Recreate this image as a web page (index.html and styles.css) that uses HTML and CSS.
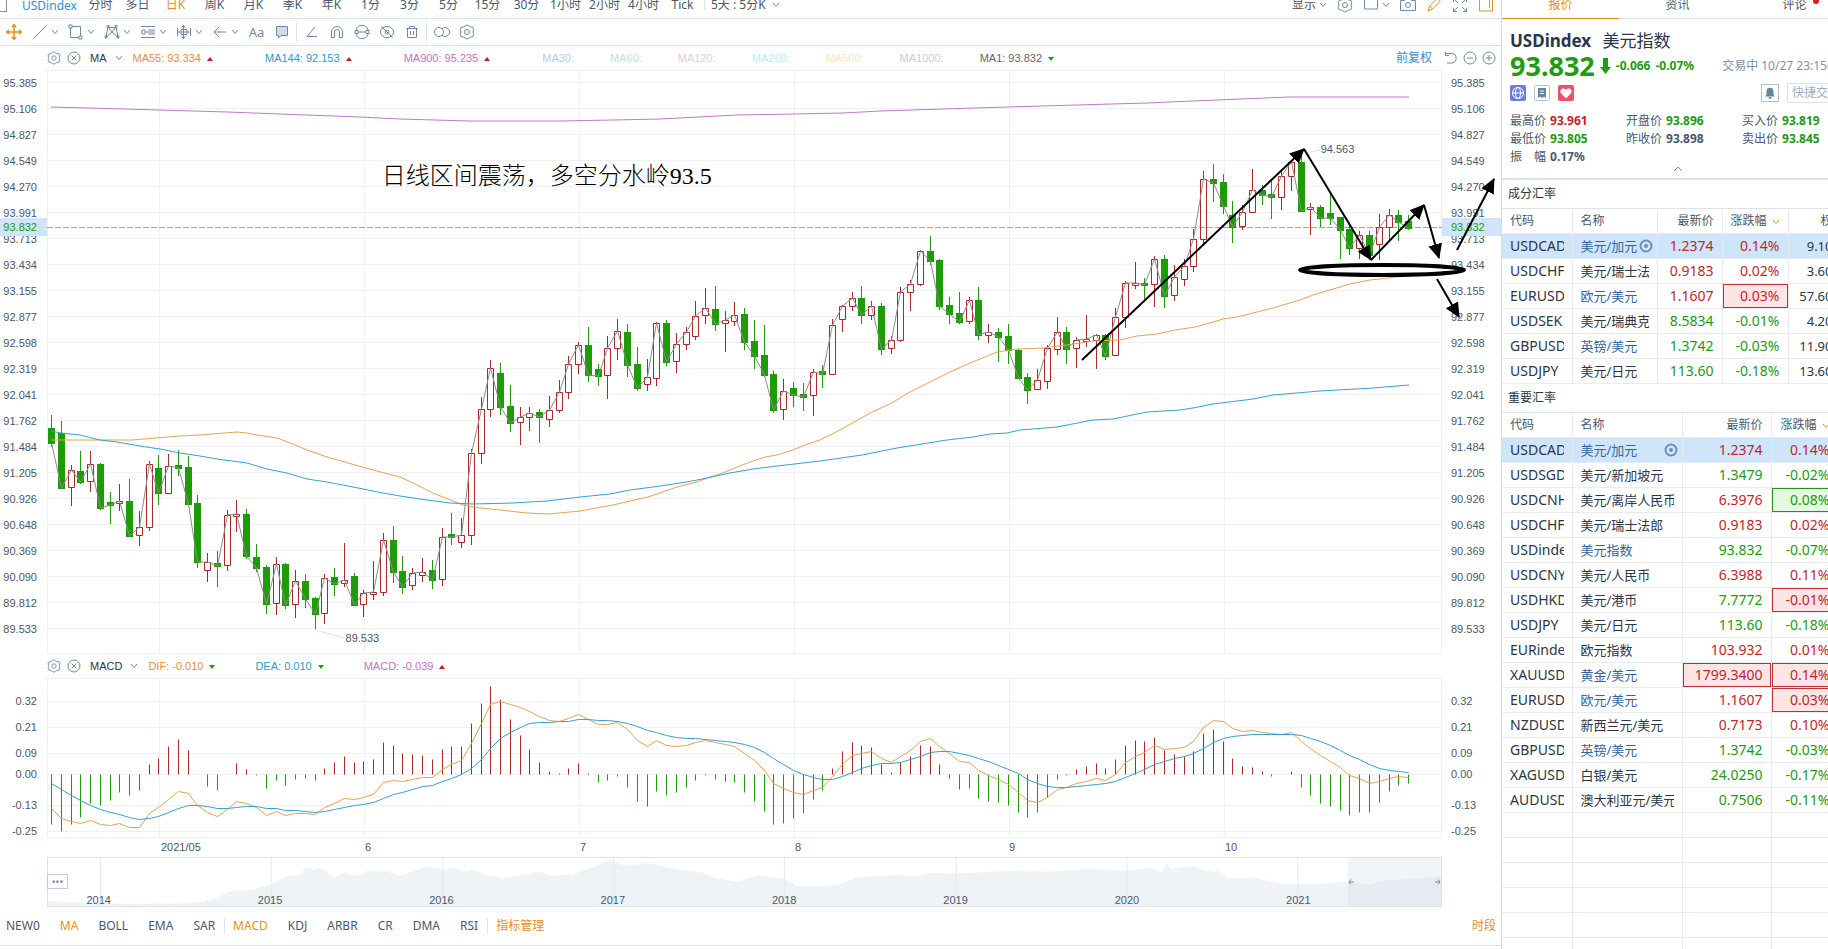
FILE: index.html
```html
<!DOCTYPE html>
<html lang="zh-CN">
<head>
    <meta charset="UTF-8">
    <meta name="viewport" content="width=device-width, initial-scale=1.0">
    <title>USDindex 美元指数</title>
    <link rel="stylesheet" href="styles.css">
</head>
<body>
    <svg class="sprite" aria-hidden="true">
        <symbol id="i-chev" viewBox="0 0 8 6"><path d="M1 1l3 3.5L7 1"/></symbol>
        <symbol id="i-gear" viewBox="0 0 16 16"><path d="M6 2l2-1 2 1 1.500 1 2.500.3.700 2.200L14 8l.7 2.500L14 12.700l-2.500.3L10 14l-2 1-2-1-1.500-1L2 12.700l-.7-2.200L2 8l-.7-2.500L2 3.300 4.500 3z"/><circle cx="8" cy="8" r="2.500"/></symbol>
        <symbol id="i-close" viewBox="0 0 14 14"><circle cx="7" cy="7" r="6"/><path d="M4.500 4.500l5 5M9.500 4.500l-5 5"/></symbol>
        <symbol id="i-eye" viewBox="0 0 14 14"><circle cx="7" cy="7" r="5.500" stroke-width="2"/><circle cx="7" cy="7" r="2" fill="currentColor" stroke="none"/></symbol>
    </svg>

    <div class="app">
        <main class="main">
            <nav class="periods" aria-label="周期">
                <span class="corner"></span>
                <a class="symbol" href="#">USDindex</a>
                <button class="short">分时</button>
                <button class="short">多日</button>
                <button class="active">日K</button>
                <button>周K</button>
                <button>月K</button>
                <button>季K</button>
                <button>年K</button>
                <button>1分</button>
                <button>3分</button>
                <button>5分</button>
                <button>15分</button>
                <button>30分</button>
                <button>1小时</button>
                <button>2小时</button>
                <button>4小时</button>
                <button>Tick</button>
                <button class="custom">5天 : 5分K <svg class="chev"><use href="#i-chev"/></svg></button>
                <div class="view-tools">
                    <button>显示<svg class="chev"><use href="#i-chev"/></svg></button>
                    <button aria-label="设置"><svg class="icon"><use href="#i-gear"/></svg></button>
                    <button aria-label="布局"><svg class="icon" viewBox="0 0 16 16"><path d="M1.500-2v14h13V-2"/></svg><svg class="chev"><use href="#i-chev"/></svg></button>
                    <button aria-label="截图"><svg class="icon" viewBox="0 0 16 16"><path d="M.5 3.500h4l1-2h5l1 2h4v10H.5z"/><circle cx="8" cy="8" r="2.500"/></svg></button>
                    <button aria-label="画线" class="active"><svg class="icon" viewBox="0 0 16 16"><path d="M2 14l1.500-5L11 1.500l3 3L6.500 12zM3.500 9l3 3"/></svg></button>
                    <button aria-label="全屏"><svg class="icon" viewBox="0 0 16 16"><path d="M1.500 5V1.500H5M1.500 1.500L6 6M11 1.500h3.500V5M14.500 1.500L10 6M1.500 11v3.500H5M1.500 14.500L6 10M14.500 11v3.500H11M14.500 14.500L10 10"/></svg></button>
                    <button aria-label="侧栏" class="active"><svg class="icon" viewBox="0 0 16 16"><path d="M1.500-1v15h13V-1M11.500 2v9"/></svg></button>
                </div>
            </nav>

            <div class="toolbar" role="toolbar" aria-label="画线工具">
                <button class="move active" aria-label="移动"><svg class="icon" viewBox="0 0 16 16"><path stroke-width="1.500" d="M8 1v14M1 8h14M6 3l2-2.300L10 3M6 13l2 2.300L10 13M3 6L.7 8 3 10M13 6l2.300 2-2.300 2"/></svg></button>
                <button class="group" aria-label="直线"><svg class="icon" viewBox="0 0 16 16"><path d="M2 14L14 2"/></svg><svg class="chev"><use href="#i-chev"/></svg></button>
                <button class="group" aria-label="图形"><svg class="icon" viewBox="0 0 16 16"><path d="M4 2.500h8.500V12M11 13.500H2.500V4M1 1h3v3H1zM11 12h3v3h-3z"/></svg><svg class="chev"><use href="#i-chev"/></svg></button>
                <button class="group" aria-label="形态"><svg class="icon" viewBox="0 0 16 16"><path d="M2 13L4 3l4 5 4-5 2 10-6-5zM4 3l8 1M1 12h2v2H1zM3 1.500h2v2H3zM11 1.500h2v2h-2zM13 12h2v2h-2z"/></svg><svg class="chev"><use href="#i-chev"/></svg></button>
                <button class="group" aria-label="黄金分割"><svg class="icon" viewBox="0 0 16 16"><path d="M1 2.500h14M1 13.500h14M8 6h7M8 10h7M2 6h3v4H2zM5 8h10"/></svg><svg class="chev"><use href="#i-chev"/></svg></button>
                <button class="group" aria-label="测量"><svg class="icon" viewBox="0 0 16 16"><path d="M1.500 4v8M14.500 4v8M1.500 8h13M7.500 2v12M5 5.500h6v5H5zM5.500 3.500l2-2 2 2M5.500 12.500l2 2 2-2"/></svg><svg class="chev"><use href="#i-chev"/></svg></button>
                <button class="group" aria-label="箭头"><svg class="icon" viewBox="0 0 16 16"><path d="M14 8H2M7 3L2 8l5 5"/></svg><svg class="chev"><use href="#i-chev"/></svg></button>
                <button class="aa">Aa</button>
                <button aria-label="批注"><svg class="icon" viewBox="0 0 16 16"><path fill="#cfdbe7" d="M2.500 2.500h11v9H7L4.500 14v-2.500h-2z"/></svg></button>
                <i class="sep"></i>
                <button aria-label="角度"><svg class="icon" viewBox="0 0 16 16"><path d="M11 3L3 12.500h10"/></svg></button>
                <button aria-label="磁铁"><svg class="icon" viewBox="0 0 16 16"><path d="M2.500 13.500V8a5.500 5.500 0 0 1 11 0v5.500h-3V8a2.500 2.500 0 0 0-5 0v5.500z"/></svg></button>
                <button aria-label="锁定"><svg class="icon" viewBox="0 0 16 16"><path d="M2 6a6.200 6.200 0 0 1 12 0M2 10a6.200 6.200 0 0 0 12 0M4 8h8M1 6.500h3v3H1zM12 6.500h3v3h-3z"/></svg></button>
                <button aria-label="隐藏"><svg class="icon" viewBox="0 0 16 16"><ellipse cx="8" cy="8" rx="6.500" ry="5.500"/><circle cx="8" cy="8" r="2"/><path d="M2.500 2.500l11 11"/></svg></button>
                <button aria-label="删除"><svg class="icon" viewBox="0 0 16 16"><path d="M2 4.500h12M5.500 4.500v-2h5v2M3.500 4.500v9h9v-9M6.500 7v4M9.500 7v4"/></svg></button>
                <i class="sep"></i>
                <button aria-label="对比"><svg class="icon" viewBox="0 0 16 16"><circle cx="5" cy="8" r="4.500"/><path d="M8 4.700a4.500 4.500 0 1 1 0 6.600"/></svg></button>
                <button aria-label="工具设置"><svg class="icon"><use href="#i-gear"/></svg></button>
            </div>

            <div class="legend">
                <svg class="icon"><use href="#i-gear"/></svg>
                <svg class="icon"><use href="#i-close"/></svg>
                <button class="name ma">MA <svg class="chev"><use href="#i-chev"/></svg></button>
                <div class="items">
                    <span class="c-orange up">MA55: 93.334</span>
                    <span class="c-blue up">MA144: 92.153</span>
                    <span class="c-purple up">MA900: 95.235</span>
                    <span class="c-ma30">MA30:</span>
                    <span class="c-ma60">MA60:</span>
                    <span class="c-ma120">MA120:</span>
                    <span class="c-ma260">MA260:</span>
                    <span class="c-ma500">MA500:</span>
                    <span class="c-ma1000">MA1000:</span>
                    <span class="c-gray down">MA1: 93.832</span>
                </div>
                <div class="zoom-tools">
                    <a href="#">前复权</a>
                    <button aria-label="撤销"><svg class="icon" viewBox="0 0 14 14"><path d="M1.500 1v3.500H5M2 2.500h6a4.800 4.800 0 0 1 0 9.500H3"/></svg></button>
                    <button aria-label="缩小"><svg class="icon" viewBox="0 0 14 14"><circle cx="7" cy="7" r="6"/><path d="M4 7h6"/></svg></button>
                    <button aria-label="放大"><svg class="icon" viewBox="0 0 14 14"><circle cx="7" cy="7" r="6"/><path d="M4 7h6M7 4v6"/></svg></button>
                </div>
            </div>

            <div class="chart-row">
                <div class="axis left" data-axis="price"></div>
                <div class="plot">
                    <svg id="price" class="price-chart" viewBox="0 0 1395 584" preserveAspectRatio="none"></svg>
                    <p class="note">日线区间震荡，多空分水岭93.5</p>
                    <span class="mark high">94.563</span>
                    <span class="mark low">89.533</span>
                </div>
                <div class="axis right" data-axis="price"></div>
                <svg class="drawing" viewBox="0 0 1501 584" preserveAspectRatio="none">
                    <defs>
                        <marker id="head" markerUnits="userSpaceOnUse" markerWidth="16" markerHeight="14" refX="14" refY="7" orient="auto">
                            <path d="M0 0l15 7-15 7z"/>
                        </marker>
                    </defs>
                    <g fill="none" stroke="#000" stroke-width="2" marker-end="url(#head)">
                        <path d="M1082 290L1304 79"/>
                        <path d="M1304 79L1371 190"/>
                        <path d="M1371 190L1424 135"/>
                        <path d="M1424 135L1439 188"/>
                        <path d="M1457 180L1494 109"/>
                        <path d="M1437 209L1459 247"/>
                    </g>
                    <ellipse cx="1382" cy="200" rx="82" ry="5" fill="none" stroke="#000" stroke-width="4"/>
                </svg>
            </div>

            <div class="legend">
                <svg class="icon"><use href="#i-gear"/></svg>
                <svg class="icon"><use href="#i-close"/></svg>
                <button class="name">MACD <svg class="chev"><use href="#i-chev"/></svg></button>
                <div class="items tight">
                    <span class="c-orange down">DIF: -0.010</span>
                    <span class="c-blue down">DEA: 0.010</span>
                    <span class="c-purple up">MACD: -0.039</span>
                </div>
            </div>

            <div class="chart-row">
                <div class="axis macd left"><span>0.32</span><span>0.21</span><span>0.09</span><span class="zero">0.00</span><span>-0.13</span><span>-0.25</span></div>
                <svg id="macd" class="macd-chart" viewBox="0 0 1395 160" preserveAspectRatio="none"></svg>
                <div class="axis macd right"><span>0.32</span><span>0.21</span><span>0.09</span><span class="zero">0.00</span><span>-0.13</span><span>-0.25</span></div>
            </div>

            <div class="months">
                <span></span><span>2021/05</span><span>6</span><span>7</span><span>8</span><span>9</span><span>10</span>
            </div>

            <div class="chart-row">
                <span></span>
                <div class="navigator">
                    <svg id="nav" viewBox="0 0 1395 49" preserveAspectRatio="none"></svg>
                    <div class="years">
                        <span>2014</span><span>2015</span><span>2016</span><span>2017</span><span>2018</span><span>2019</span><span>2020</span><span>2021</span>
                    </div>
                    <button class="more" aria-label="更多">•••</button>
                    <div class="range">
                        <svg viewBox="0 0 6 8"><path d="M6 4H1M3 1.500L1 4l2 2.500"/></svg>
                        <svg viewBox="0 0 6 8"><path d="M0 4h5M3 1.500L5 4 3 6.500"/></svg>
                    </div>
                </div>
                <span></span>
            </div>

            <nav class="indicators" aria-label="指标">
                <button>NEW0</button>
                <button class="active">MA</button>
                <button>BOLL</button>
                <button>EMA</button>
                <button>SAR</button>
                <button class="active line">MACD</button>
                <button>KDJ</button>
                <button>ARBR</button>
                <button>CR</button>
                <button>DMA</button>
                <button>RSI</button>
                <button class="active line">指标管理</button>
                <button class="active session">时段</button>
            </nav>
        </main>

        <aside class="side">
            <nav class="side-tabs">
                <a class="active" href="#">报价</a>
                <a href="#">资讯</a>
                <a class="dot" href="#">评论</a>
            </nav>

            <section class="quote">
                <h1>USDindex <span>美元指数</span></h1>
                <div class="last">
                    <strong>93.832</strong>
                    <svg class="drop" viewBox="0 0 11 16"><path d="M3 0h5v9h3l-5.500 7L0 9h3z"/></svg>
                    <b>-0.066</b>
                    <b>-0.07%</b>
                    <time>交易中 10/27 23:15(美东)</time>
                </div>
                <div class="badges">
                    <svg viewBox="0 0 16 16"><rect width="16" height="16" rx="2" fill="#6b7fd0"/><g fill="none" stroke="#fff"><circle cx="8" cy="8" r="5.500"/><ellipse cx="8" cy="8" rx="2.500" ry="5.500"/><path d="M2.500 8h11"/></g></svg>
                    <svg viewBox="0 0 16 16"><rect x=".5" y=".5" width="15" height="15" rx="1" fill="#fff" stroke="#b4c2d0"/><path fill="#6585a5" d="M4 3h8v10l-2-1.500L8 13l-2-1.500L4 13z"/><path stroke="#fff" d="M6 6h4M6 8.500h4"/></svg>
                    <svg viewBox="0 0 16 16"><rect width="16" height="16" rx="2" fill="#e9526b"/><path fill="#fff" d="M8 13.500L3 8.300C.8 5.500 4.500 1.500 8 4.800c3.500-3.300 7.200.7 5 3.500z"/></svg>
                    <button class="bell" aria-label="提醒"><svg viewBox="0 0 18 18"><path d="M9 3c3 0 4 2 4 5v3l1.500 2h-11L5 11V8c0-3 1-5 4-5zM7.500 13.500h3v2h-3z"/></svg></button>
                    <button class="trade">快捷交易</button>
                </div>
                <dl class="stats">
                    <div><dt>最高价</dt><dd class="up-text">93.961</dd></div>
                    <div><dt>开盘价</dt><dd class="down-text">93.896</dd></div>
                    <div><dt>买入价</dt><dd class="down-text">93.819</dd></div>
                    <div><dt>最低价</dt><dd class="down-text">93.805</dd></div>
                    <div><dt>昨收价</dt><dd>93.898</dd></div>
                    <div><dt>卖出价</dt><dd class="down-text">93.845</dd></div>
                    <div><dt>振　幅</dt><dd>0.17%</dd></div>
                </dl>
                <button class="fold" aria-label="收起"><svg viewBox="0 0 10 6"><path d="M1 5l4-4 4 4"/></svg></button>
            </section>

            <h2>成分汇率</h2>
            <table class="parts">
                <colgroup><col class="code"><col class="title"><col class="price"><col class="pct"><col class="weight"></colgroup>
                <thead>
                    <tr><th>代码</th><th>名称</th><th>最新价</th><th>涨跌幅<svg class="chev"><use href="#i-chev"/></svg></th><th>权重</th></tr>
                </thead>
                <tbody>
                    <tr class="selected"><td><span>USDCAD</span></td><td class="held"><span>美元/加元</span><svg class="eye"><use href="#i-eye"/></svg></td><td class="up-text">1.2374</td><td class="up-text">0.14%</td><td>9.10</td></tr>
                    <tr><td><span>USDCHF</span></td><td><span>美元/瑞士法郎</span></td><td class="up-text">0.9183</td><td class="up-text">0.02%</td><td>3.60</td></tr>
                    <tr><td><span>EURUSD</span></td><td class="held"><span>欧元/美元</span></td><td class="up-text">1.1607</td><td class="up-text flash-up">0.03%</td><td>57.60</td></tr>
                    <tr><td><span>USDSEK</span></td><td><span>美元/瑞典克朗</span></td><td class="down-text">8.5834</td><td class="down-text">-0.01%</td><td>4.20</td></tr>
                    <tr><td><span>GBPUSD</span></td><td class="held"><span>英镑/美元</span></td><td class="down-text">1.3742</td><td class="down-text">-0.03%</td><td>11.90</td></tr>
                    <tr><td><span>USDJPY</span></td><td><span>美元/日元</span></td><td class="down-text">113.60</td><td class="down-text">-0.18%</td><td>13.60</td></tr>
                </tbody>
            </table>

            <h2>重要汇率</h2>
            <table class="majors">
                <colgroup><col class="code"><col class="title"><col class="price"><col class="pct"></colgroup>
                <thead>
                    <tr><th>代码</th><th>名称</th><th>最新价</th><th>涨跌幅<svg class="chev"><use href="#i-chev"/></svg></th></tr>
                </thead>
                <tbody>
                    <tr class="selected"><td><span>USDCAD</span></td><td class="held"><span>美元/加元</span><svg class="eye"><use href="#i-eye"/></svg></td><td class="up-text">1.2374</td><td class="up-text">0.14%</td></tr>
                    <tr><td><span>USDSGD</span></td><td><span>美元/新加坡元</span></td><td class="down-text">1.3479</td><td class="down-text">-0.02%</td></tr>
                    <tr><td><span>USDCNH</span></td><td><span>美元/离岸人民币</span></td><td class="up-text">6.3976</td><td class="down-text flash-down">0.08%</td></tr>
                    <tr><td><span>USDCHF</span></td><td><span>美元/瑞士法郎</span></td><td class="up-text">0.9183</td><td class="up-text">0.02%</td></tr>
                    <tr><td><span>USDindex</span></td><td class="held"><span>美元指数</span></td><td class="down-text">93.832</td><td class="down-text">-0.07%</td></tr>
                    <tr><td><span>USDCNY</span></td><td><span>美元/人民币</span></td><td class="up-text">6.3988</td><td class="up-text">0.11%</td></tr>
                    <tr><td><span>USDHKD</span></td><td><span>美元/港币</span></td><td class="down-text">7.7772</td><td class="up-text flash-up">-0.01%</td></tr>
                    <tr><td><span>USDJPY</span></td><td><span>美元/日元</span></td><td class="down-text">113.60</td><td class="down-text">-0.18%</td></tr>
                    <tr><td><span>EURindex</span></td><td><span>欧元指数</span></td><td class="up-text">103.932</td><td class="up-text">0.01%</td></tr>
                    <tr><td><span>XAUUSD</span></td><td class="held"><span>黄金/美元</span></td><td class="up-text flash-up">1799.3400</td><td class="up-text flash-up">0.14%</td></tr>
                    <tr><td><span>EURUSD</span></td><td class="held"><span>欧元/美元</span></td><td class="up-text">1.1607</td><td class="up-text flash-up">0.03%</td></tr>
                    <tr><td><span>NZDUSD</span></td><td><span>新西兰元/美元</span></td><td class="up-text">0.7173</td><td class="up-text">0.10%</td></tr>
                    <tr><td><span>GBPUSD</span></td><td class="held"><span>英镑/美元</span></td><td class="down-text">1.3742</td><td class="down-text">-0.03%</td></tr>
                    <tr><td><span>XAGUSD</span></td><td><span>白银/美元</span></td><td class="down-text">24.0250</td><td class="down-text">-0.17%</td></tr>
                    <tr><td><span>AUDUSD</span></td><td><span>澳大利亚元/美元</span></td><td class="down-text">0.7506</td><td class="down-text">-0.11%</td></tr>
                    <tr><td></td><td></td><td></td><td></td></tr>
                    <tr><td></td><td></td><td></td><td></td></tr>
                    <tr><td></td><td></td><td></td><td></td></tr>
                    <tr><td></td><td></td><td></td><td></td></tr>
                    <tr><td></td><td></td><td></td><td></td></tr>
                    <tr><td></td><td></td><td></td><td></td></tr>
                </tbody>
            </table>
        </aside>
    </div>

    <script src="chart.js"></script>
</body>
</html>
```

FILE: styles.css
```css
* {
    box-sizing: border-box;
}

body {
    margin: 0;
    font-family: "Noto Sans", "Noto Sans CJK SC", sans-serif;
    font-size: 12px;
    line-height: 16px;
    color: #4a586a;
    background: #fff;
}

button {
    display: inline-flex;
    align-items: center;
    justify-content: center;
    padding: 0;
    border: 0;
    background: none;
    font: inherit;
    color: inherit;
    white-space: nowrap;
    cursor: pointer;
}

a {
    color: inherit;
    text-decoration: none;
}

svg {
    display: block;
    flex: none;
}

.sprite {
    position: absolute;
    width: 0;
    height: 0;
}

.icon {
    width: 16px;
    height: 16px;
    fill: none;
    stroke: #6f8aa6;
}

.chev {
    width: 8px;
    height: 6px;
    fill: none;
    stroke: #6f8aa6;
}

.active {
    color: #e0911f;
}

.active .icon {
    stroke: #e0911f;
}

.up-text {
    color: #c0262c;
}

.down-text {
    color: #229a12;
}

.app {
    display: grid;
    grid-template-columns: minmax(0, 1fr) 327px;
    height: 100vh;
    overflow: hidden;
}

.main {
    min-width: 0;
}

/* period bar */
.periods {
    display: flex;
    align-items: flex-start;
    height: 19px;
    line-height: 10px;
    border-bottom: 1px solid #dde2e8;
}

.periods button {
    width: 39px;
    height: 10px;
    line-height: 10px;
}

.periods .short {
    width: 37px;
}

.corner {
    width: 7px;
    height: 12px;
    margin-right: 15px;
    border: solid #7d92a8;
    border-width: 0 1px 1px 0;
}

.symbol {
    width: 60px;
    line-height: 12px;
    color: #2f8fd2;
}

.periods .custom {
    width: auto;
    margin-left: 2px;
    padding-left: 6px;
    gap: 6px;
    border-left: 1px solid #dde2e8;
}

.view-tools {
    display: flex;
    align-items: center;
    gap: 10px;
    margin-left: auto;
    padding-right: 7px;
}

.periods .view-tools button {
    width: auto;
    gap: 3px;
}

/* drawing tools */
.toolbar {
    display: flex;
    align-items: center;
    height: 27px;
    border-bottom: 1px solid #dde2e8;
}

.toolbar button {
    width: 25px;
    height: 24px;
}

.toolbar .move {
    width: 28px;
}

.toolbar .group {
    width: 36px;
    padding-right: 1px;
    gap: 3px;
}

.toolbar .aa {
    font-size: 13px;
    color: #6f8aa6;
}

.sep {
    width: 1px;
    height: 20px;
    margin: 0 2px;
    background: #dde2e8;
}

/* indicator legends */
.legend {
    display: flex;
    align-items: center;
    gap: 6px;
    height: 24px;
    padding: 0 5px 0 47px;
    font-family: "Liberation Sans", "Noto Sans CJK SC", sans-serif;
    font-size: 11px;
}

.legend .icon {
    width: 14px;
    height: 14px;
}

.legend .name {
    gap: 8px;
    margin-left: 3px;
    color: #2b3646;
}

.items {
    display: flex;
    gap: 36px;
    margin-left: 4px;
}

.items.tight {
    gap: 24px;
}

.up::after,
.down::after {
    content: "";
    display: inline-block;
    margin: 0 16px 1px 6px;
    border: 3px solid transparent;
    border-top: 0;
    border-bottom: 4px solid #b52020;
}

.down::after {
    border-bottom: 0;
    border-top: 4px solid #229a12;
}

.c-orange { color: #e58f3a; }
.c-blue { color: #2a9dc4; }
.c-purple { color: #cc6fc6; }
.c-ma30 { color: #b3cdea; }
.c-ma60 { color: #bfe3cd; }
.c-ma120 { color: #f3c6cd; }
.c-ma260 { color: #b5f0f0; }
.c-ma500 { color: #fbe5b8; }
.c-ma1000 { color: #d3c3ea; }
.c-gray { color: #666; }

.zoom-tools {
    display: flex;
    align-items: center;
    gap: 5px;
    margin-left: auto;
}

.zoom-tools a {
    margin-right: 7px;
    font-size: 12px;
    color: #2f8fd2;
}

/* charts */
.chart-row {
    position: relative;
    display: grid;
    grid-template-columns: 47px minmax(0, 1fr) 59px;
}

.plot {
    position: relative;
}

.price-chart {
    width: 100%;
    height: 584px;
}

.macd-chart {
    width: 100%;
    height: 160px;
}

.drawing {
    position: absolute;
    inset: 0;
    width: 100%;
    height: 100%;
    pointer-events: none;
}

.axis {
    position: relative;
    display: flex;
    flex-direction: column;
    font-family: "Liberation Sans", sans-serif;
    font-size: 11px;
    line-height: 26px;
}

.axis.left {
    padding-right: 10px;
    text-align: right;
}

.axis.right {
    padding-left: 9px;
}

.axis.macd {
    height: 160px;
    padding-top: 10px;
}

.axis .zero {
    line-height: 16px;
    margin-bottom: 10px;
}

.axis .now {
    position: absolute;
    top: 148px;
    left: 0;
    right: 0;
    padding: inherit;
    line-height: 18px;
    color: #229a12;
    background: #cfe5fc;
}

.note {
    position: absolute;
    left: 24%;
    top: 90px;
    margin: 0;
    font-family: "Liberation Serif", "Noto Sans CJK SC", serif;
    font-size: 24px;
    font-weight: 300;
    line-height: 32px;
    white-space: nowrap;
    color: #000;
}

.mark {
    position: absolute;
    font-family: "Liberation Sans", sans-serif;
    font-size: 11px;
}

.mark.high {
    left: 91.3%;
    top: 71px;
}

.mark.low {
    left: 21.4%;
    top: 560px;
}

.months {
    display: grid;
    grid-template-columns: 161fr 204fr 215fr 215fr 214fr 216fr 276fr;
    font-family: "Liberation Sans", sans-serif;
    font-size: 11px;
    line-height: 19px;
}

.navigator {
    position: relative;
    height: 50px;
    border: 1px solid #dde2e8;
}

.navigator > svg {
    width: 100%;
    height: 48px;
}

.years {
    position: absolute;
    left: -35px;
    right: 57px;
    bottom: -2px;
    display: grid;
    grid-template-columns: repeat(8, 1fr);
    font-family: "Liberation Sans", sans-serif;
    font-size: 11px;
    text-align: center;
}

.more {
    position: absolute;
    left: -1px;
    top: 16px;
    width: 21px;
    height: 15px;
    border: 1px solid #c3ccd6;
    background: #fff;
    font-size: 10px;
    color: #6f8aa6;
}

.range {
    position: absolute;
    top: 0;
    bottom: 0;
    right: 0;
    width: 93px;
    display: flex;
    align-items: center;
    justify-content: space-between;
    background: rgba(190, 203, 218, 0.2);
}

.range svg {
    width: 6px;
    height: 8px;
    fill: none;
    stroke: #6f8aa6;
}

.indicators {
    display: flex;
    align-items: center;
    gap: 20px;
    height: 39px;
    padding: 0 5px 0 6px;
    border-bottom: 1px solid #dde2e8;
}

.indicators .line {
    margin-left: -11px;
    padding-left: 8px;
    border-left: 1px solid #dde2e8;
}

.indicators .session {
    margin-left: auto;
}

/* quote panel */
.side {
    min-width: 0;
    overflow: hidden;
    border-left: 1px solid #d5dbe2;
}

.side-tabs {
    display: grid;
    grid-template-columns: repeat(3, 117px);
    height: 19px;
    line-height: 10px;
    text-align: center;
    border-bottom: 1px solid #dde2e8;
}

.side-tabs a {
    position: relative;
    height: 19px;
}

.side-tabs .active {
    border-bottom: 1px solid #e0911f;
}

.side-tabs .dot::after {
    content: "";
    position: absolute;
    left: 77px;
    top: -2px;
    width: 6px;
    height: 6px;
    border-radius: 3px;
    background: #d8201c;
}

.quote {
    width: 351px;
    height: 161px;
    padding: 10px 8px 0;
    border-bottom: 2px solid #dde2e8;
}

h1 {
    margin: 0;
    font-size: 17px;
    line-height: 24px;
    color: #2b3646;
}

h1 span {
    margin-left: 7px;
    font-weight: 400;
}

.last {
    display: flex;
    align-items: center;
    gap: 5px;
    height: 26px;
    color: #229a12;
    white-space: nowrap;
}

.last strong {
    font-size: 27px;
    line-height: 26px;
}

.drop {
    width: 11px;
    height: 16px;
    fill: #229a12;
}

.last time {
    margin-left: 23px;
    color: #8292a5;
}

.badges {
    display: flex;
    align-items: center;
    gap: 8px;
    height: 28px;
}

.badges > svg {
    width: 16px;
    height: 16px;
}

.bell {
    width: 18px;
    height: 18px;
    margin-left: auto;
    border: 1px solid #b4c2d0;
    fill: #6585a5;
}

.trade {
    height: 20px;
    padding: 0 4px;
    border: 1px solid #dde2e8;
    color: #a3afbc;
}

.stats {
    display: grid;
    grid-template-columns: repeat(3, 116px);
    margin: 5px 0 0;
    line-height: 18px;
}

.stats div {
    display: flex;
    gap: 4px;
}

.stats dd {
    margin: 0;
    font-weight: 700;
}

.fold {
    display: flex;
    margin: 0 auto;
}

.fold svg {
    width: 10px;
    height: 6px;
    fill: none;
    stroke: #6f8aa6;
}

h2 {
    margin: 0;
    padding-left: 6px;
    font-size: 12px;
    font-weight: 400;
    line-height: 28px;
    color: #2b3646;
}

table {
    table-layout: fixed;
    border-collapse: collapse;
    border-top: 1px solid #dde2e8;
}

.parts {
    width: 351px;
    border-bottom: 1px solid #dde2e8;
}

.majors {
    width: 336px;
}

.code { width: 70px; }
.parts .title { width: 85px; }
.parts .price { width: 65px; }
.parts .pct { width: 66px; }
.parts .weight { width: 65px; }
.majors .title { width: 110px; }
.majors .price { width: 89px; }
.majors .pct { width: 67px; }

th,
td {
    position: relative;
    height: 25px;
    padding: 0 8px;
    border-right: 1px solid #e8ecf0;
    border-bottom: 1px solid #e8ecf0;
    font-size: 14px;
    line-height: 16px;
    text-align: right;
    white-space: nowrap;
}

th {
    font-size: 12px;
    font-weight: 400;
}

th .chev {
    display: inline-block;
    margin-left: 5px;
    stroke: #e0911f;
}

th:nth-child(-n+2),
td:nth-child(-n+2) {
    text-align: left;
}

td:nth-child(-n+2) {
    color: #2b3646;
}

td:nth-child(2) {
    font-size: 13px;
}

td:nth-child(5) {
    padding-right: 20px;
    font-size: 13px;
    color: #2b3646;
}

td span {
    display: block;
    overflow: hidden;
}

td.held:nth-child(2) {
    color: #34659b;
}

.selected {
    background: #cfe5fc;
}

.eye {
    position: absolute;
    right: 4px;
    top: 5px;
    width: 14px;
    height: 14px;
    fill: none;
    stroke: currentColor;
    color: #6f8fb2;
}

.flash-up {
    background: #fde5e6;
    box-shadow: inset 0 0 0 1px #b8323a;
}

.flash-down {
    background: #e4f8e2;
    box-shadow: inset 0 0 0 1px #2b8c22;
}
```

FILE: chart.js
```js
const STEP = 9.763;
const xAt = i => Math.round(4 + i * STEP) + 0.5;
const months = [11, 32, 54, 76, 98, 120];

const prices = [
    '95.385', '95.106', '94.827', '94.549', '94.270', '93.991', '93.713', '93.434', '93.155', '92.877', '92.598',
    '92.319', '92.041', '91.762', '91.484', '91.205', '90.926', '90.648', '90.369', '90.090', '89.812', '89.533'
];

// high, body top, body bottom, low, rising
const candles = [
    [345,358,373,377,0],[351,363,418,419,0],[395,400,417,436,1],[381,401,412,414,0],[381,394,411,422,1],
    [393,394,438,440,0],[422,432,435,454,0],[414,431,433,441,1],[409,431,466,467,0],[441,457,465,476,1],
    [391,394,457,461,1],[385,398,423,435,0],[384,396,423,424,1],[380,395,398,406,0],[386,397,434,435,0],
    [425,433,492,498,0],[483,492,500,512,1],[481,493,496,517,0],[440,445,495,501,1],[430,444,446,462,1],
    [439,444,486,489,0],[474,487,498,502,0],[495,497,534,544,0],[487,494,533,545,1],[493,494,535,539,0],
    [500,511,534,548,1],[504,511,529,538,0],[527,528,544,559,0],[504,508,543,554,1],[498,507,514,526,0],
    [473,510,513,517,1],[503,506,535,536,0],[520,523,534,547,1],[491,522,524,530,1],[463,470,522,526,1],
    [456,470,502,513,0],[486,501,517,524,0],[498,503,515,520,1],[488,502,505,512,1],[490,500,510,519,0],
    [458,467,509,516,1],[443,464,467,475,0],[448,465,472,478,1],[379,383,465,475,1],[327,339,383,394,1],
    [290,298,339,347,1],[293,303,337,345,0],[315,336,353,362,0],[337,347,352,375,1],[337,343,347,361,1],
    [339,342,347,373,0],[326,340,349,357,1],[310,322,340,343,1],[286,294,322,329,1],[272,275,294,304,1],
    [257,275,305,312,0],[294,299,306,316,0],[266,278,305,329,1],[249,261,278,290,1],[254,262,295,307,0],
    [277,294,318,321,0],[289,307,314,321,1],[252,253,308,316,1],[250,253,292,296,0],[263,274,291,303,1],
    [257,262,274,280,1],[231,246,266,270,1],[218,238,245,254,1],[216,239,254,261,0],[241,250,253,282,1],
    [232,245,251,256,1],[238,244,272,280,0],[250,271,286,299,0],[255,285,305,307,0],[301,304,340,343,0],
    [309,321,339,350,1],[312,318,325,337,0],[313,324,327,341,0],[299,302,325,346,1],[295,301,304,318,0],
    [249,255,304,305,1],[235,236,249,262,1],[222,228,236,241,1],[216,228,245,254,0],[231,236,245,250,1],
    [233,236,279,285,0],[266,270,278,284,1],[217,222,270,272,1],[210,214,222,241,1],[180,181,214,216,1],
    [166,181,191,195,0],[189,190,236,240,0],[227,235,244,254,0],[222,243,252,254,0],[227,230,251,254,1],
    [217,230,265,270,0],[254,262,265,273,1],[258,262,267,292,0],[254,266,280,294,0],[279,280,308,309,0],
    [303,307,320,334,0],[299,310,319,320,1],[275,278,311,319,1],[247,262,279,285,1],[257,262,279,294,0],
    [267,270,278,298,1],[245,269,271,277,1],[264,265,270,299,1],[264,265,286,290,0],[238,247,285,286,1],
    [211,213,247,258,1],[192,213,215,219,1],[208,213,215,229,0],[186,189,214,237,1],[185,189,226,238,0],
    [195,207,225,231,1],[189,196,209,216,1],[159,169,196,202,1],[101,109,169,174,1],[94,109,113,132,0],
    [104,112,136,144,0],[131,145,157,173,0],[135,142,156,160,1],[99,120,142,143,1],[115,120,125,135,0],
    [110,124,127,149,0],[101,106,127,140,1],[90,92,106,121,1],[80,92,141,142,0],[133,137,139,165,1],
    [135,137,148,157,0],[123,143,148,155,0],[147,147,160,189,0],[152,159,178,185,0],[161,165,178,189,1],
    [161,165,185,188,0],[144,157,174,190,1],[139,145,157,171,1],[140,145,152,171,0],[145,151,158,160,0]
];

const ma55 = '4,370 85,370 133,366 153,365 190,362 200,363 210,365 230,368 246,374 260,380 280,387 326,400 353,407 366,413 386,423 416,435 433,438 453,440 480,443 502,444 533,441 566,435 583,431 601,427 630,417 650,412 660,408 676,403 690,397 706,391 718,387 730,385 746,380 758,375 773,370 793,360 825,342 843,334 863,322 883,312 903,302 923,293 950,282 970,279 996,278 1020,275 1046,271 1073,270 1090,266 1110,264 1128,260 1148,257 1163,253 1176,249 1190,247 1226,238 1253,230 1266,225 1303,214 1323,210 1350,207 1362,205';
const ma144 = '4,361 14,363 33,365 53,370 70,372 93,376 113,379 133,383 153,386 170,389 200,393 220,399 240,403 260,409 280,412 296,415 336,423 353,426 380,430 403,433 426,434 466,433 500,431 533,427 563,424 583,420 606,417 640,412 660,408 683,403 706,399 730,396 773,391 815,385 850,378 900,370 926,367 943,364 960,363 973,360 1010,357 1046,350 1066,349 1100,342 1133,340 1146,338 1166,334 1206,329 1226,325 1273,321 1326,318 1362,315';
const ma900 = '4,37 78,39 180,42 313,47 353,49 423,51 513,51 566,50 613,49 690,45 746,44 796,43 833,41 960,37 1100,33 1193,29 1242,27 1362,27';

// distances from the zero line
const hist = [
    -50,-57,-50,-43,-29,-31,-26,-18,-21,-16,10,16,28,35,24,0,-12,-16,0,11,
    5,-1,-14,-6,-11,-5,-4,-6,6,12,18,12,13,15,32,29,21,20,19,15,
    25,28,28,51,71,88,75,55,39,25,12,3,1,6,11,1,-8,-6,-2,-13,
    -27,-32,-17,-21,-18,-13,-6,-1,-5,-7,-8,-18,-27,-37,-50,-49,-44,-39,-25,-16,
    6,23,32,29,27,10,2,12,18,29,28,10,-4,-15,-14,-24,-27,-28,-31,-38,
    -43,-38,-23,-5,-1,5,8,11,6,15,29,34,33,37,24,20,18,23,41,45,
    33,16,8,7,3,-2,0,3,-13,-21,-29,-32,-36,-41,-38,-38,-28,-17,-11,-9
];
const dif = [
    -34,-44,-47,-49,-46,-50,-51,-49,-53,-53,-39,-33,-25,-17,-19,-31,-38,-42,-35,-27,
    -29,-33,-41,-37,-41,-39,-39,-40,-33,-29,-24,-25,-23,-20,-8,-6,-7,-5,-3,-3,
    5,10,14,31,51,70,73,70,67,63,58,54,53,56,60,55,50,50,52,45,
    34,28,34,29,28,29,32,34,32,30,28,21,14,4,-9,-14,-18,-20,-16,-13,
    -2,10,19,21,23,16,12,18,24,33,36,28,21,13,12,4,-1,-5,-10,-18,
    -26,-28,-23,-15,-13,-9,-7,-4,-6,0,12,18,22,29,25,26,27,33,47,54,
    53,46,43,44,42,41,40,42,33,26,19,13,7,-1,-4,-9,-7,-4,-2,-3
];
const dea = [
    -9,-15,-21,-26,-31,-35,-38,-40,-43,-45,-44,-42,-38,-34,-31,-31,-32,-34,-34,-33,
    -32,-32,-34,-34,-36,-36,-37,-38,-37,-35,-33,-31,-30,-28,-24,-20,-18,-15,-12,-11,
    -7,-4,0,6,15,26,36,42,47,51,52,52,53,53,55,55,54,54,53,51,
    48,44,42,39,37,36,36,35,34,33,32,30,27,22,16,10,4,0,-3,-5,
    -5,-2,2,6,9,11,11,12,15,18,22,23,23,21,19,16,13,9,5,1,
    -5,-9,-12,-13,-13,-12,-11,-10,-9,-7,-3,1,5,10,13,16,18,21,26,32,
    36,38,39,40,40,40,40,40,39,36,33,29,24,19,15,10,6,4,3,2
];

const overview = [
    [0,44],[52,46],[89,47],[147,46],[166,42],[183,34],[205,32],[224,27],[239,18],[251,18],[259,9],[266,12],[273,10],[287,20],
    [297,14],[307,19],[321,13],[341,14],[353,18],[370,12],[380,9],[397,12],[409,10],[418,14],[426,12],[438,17],[455,21],[491,14],
    [503,18],[525,17],[549,8],[561,2],[578,8],[600,5],[622,10],[651,14],[670,21],[690,24],[712,18],[737,21],[751,29],[790,28],
    [809,20],[853,17],[867,19],[887,15],[906,16],[964,13],[1003,14],[1042,11],[1081,13],[1105,10],[1115,16],[1120,4],[1124,11],
    [1149,8],[1156,13],[1173,14],[1183,21],[1207,20],[1241,27],[1279,26],[1301,24],[1323,27],[1338,23],[1372,21],[1395,18]
];

const RED = '#a8282c';
const GREEN = '#1f9a08';

function path(d, stroke, extra = '') {
    return `<path d="${d}" fill="none" stroke="${stroke}" ${extra}/>`;
}

function poly(points, stroke) {
    return `<polyline points="${points}" fill="none" stroke="${stroke}"/>`;
}

function grid(rows, height) {
    let d = `M0.5 0V${height}M1394.5 0V${height}M0 0.5H1395M0 ${height - 0.5}H1395`;
    rows.forEach(y => d += `M0 ${y}H1395`);
    months.forEach(i => d += `M${xAt(i) + 1} 0V${height}`);
    return path(d, '#eef1f3');
}

function drawPrice() {
    const rows = prices.map((_, k) => 12.5 + 26 * k);
    let svg = grid(rows, 584);
    svg += path('M0 157.5H1395', '#d0a338', 'stroke-dasharray="6 2"');

    candles.forEach(([high, top, bottom, low, rising], i) => {
        const x = xAt(i);
        if (rising) {
            svg += path(`M${x} ${high}V${top}M${x} ${bottom}V${low}`, RED);
            svg += path(`M${x - 3} ${top + 0.5}h6V${bottom + 0.5}h-6z`, RED);
        } else {
            svg += path(`M${x} ${high}V${low}`, GREEN);
            svg += `<rect x="${x - 3.5}" y="${top}" width="7" height="${bottom - top + 1}" fill="${GREEN}"/>`;
        }
    });

    svg += poly(candles.map((c, i) => `${xAt(i)},${c[4] ? c[1] : c[2]}`).join(' '), '#8c8c8c');
    svg += poly(ma900, '#c07ac4');
    svg += poly(ma55, '#e6a252');
    svg += poly(ma144, '#35a2cc');
    svg += path('M268 560L297 568M1258 83L1273 80', '#e4e4e4');
    document.getElementById('price').innerHTML = svg;
}

function drawMacd() {
    const zero = 96.5;
    let svg = grid([23.5, 49.5, 75.5, zero, 127.5, 153.5], 160);
    hist.forEach((v, i) => {
        if (v) svg += path(`M${xAt(i)} ${zero}V${zero - v}`, v > 0 ? RED : GREEN);
    });
    svg += poly(dif.map((v, i) => `${xAt(i)},${zero - v}`).join(' '), '#e6a252');
    svg += poly(dea.map((v, i) => `${xAt(i)},${zero - v}`).join(' '), '#35a2cc');
    document.getElementById('macd').innerHTML = svg;
}

function drawOverview() {
    let d = 'M0 49';
    for (let k = 1; k < overview.length; k++) {
        const [x0, y0] = overview[k - 1];
        const [x1, y1] = overview[k];
        for (let x = x0; x < x1; x += 3) {
            const y = y0 + (y1 - y0) * (x - x0) / (x1 - x0);
            d += `L${x} ${(y + Math.sin(x * 0.9) * 0.8).toFixed(1)}`;
        }
    }
    let years = '';
    for (let k = 0; k < 8; k++) years += `M${Math.round(52 + k * 171.3) + 0.5} 0V49`;
    document.getElementById('nav').innerHTML =
        `<path d="${d}L1395 18V49z" fill="#eff3f6"/>` + path(years, '#e4e9ed');
}

function drawPriceAxis() {
    document.querySelectorAll('[data-axis="price"]').forEach(axis => {
        prices.forEach(price => {
            const label = document.createElement('span');
            label.textContent = price;
            axis.append(label);
        });
        const now = document.createElement('span');
        now.className = 'now';
        now.textContent = '93.832';
        axis.append(now);
    });
}

drawPrice();
drawMacd();
drawOverview();
drawPriceAxis();
```
